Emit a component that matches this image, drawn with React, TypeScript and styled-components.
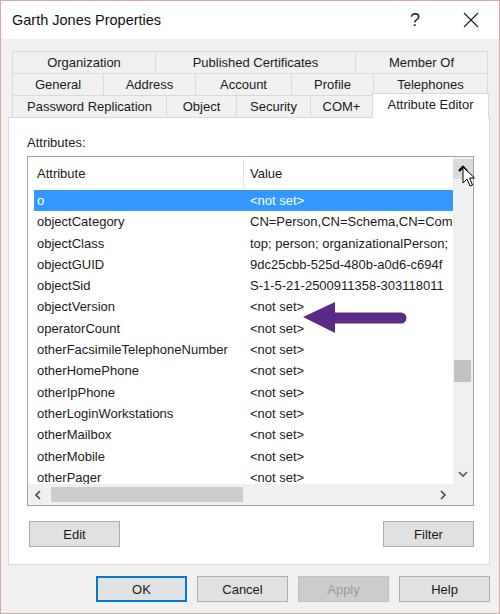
import React from 'react'
import styled, { createGlobalStyle } from 'styled-components'

const GlobalStyle = createGlobalStyle`
  body {
    margin: 0;
    font-family: "Liberation Sans", Arial, sans-serif;
    background: #fff;
  }
`

const Window = styled.div`
  position: relative;
  width: 500px;
  height: 614px;
  box-sizing: border-box;
  border: 1px solid #d9a7a7;
  background: #f0f0f0;
  display: flex;
  flex-direction: column;
  color: #111;
`

const TitleBar = styled.div`
  height: 38px;
  background: #fff;
  display: flex;
  align-items: center;
  padding-left: 11px;
`

const Title = styled.div`
  flex: 1;
  font-size: 14.5px;
  color: #111;
`

const TitleButton = styled.div`
  width: 46px;
  height: 38px;
  display: flex;
  align-items: center;
  justify-content: center;
  font-size: 18px;
  color: #222;
`

const CloseButton = styled(TitleButton)`
  margin-left: 10px;
  margin-right: 5px;
`

const Body = styled.div`
  flex: 1;
  padding: 12px 0 0 7px;
  display: flex;
  flex-direction: column;
`

const TabStrip = styled.div`
  margin-left: 4px;
  display: flex;
  flex-direction: column;
`

const TabRow = styled.div`
  display: flex;
  align-items: flex-end;
  height: 22px;
`

const Tab = styled.div<{ $w: number; $active?: boolean }>`
  width: ${(p) => p.$w}px;
  height: ${(p) => (p.$active ? 25 : 22)}px;
  box-sizing: border-box;
  margin-left: -1px;
  border: 1px solid #d9d9d9;
  border-bottom: none;
  background: ${(p) => (p.$active ? '#fff' : '#f0f0f0')};
  font-size: 13px;
  color: #1a1a1a;
  display: flex;
  align-items: ${(p) => (p.$active ? 'flex-start' : 'center')};
  padding-top: ${(p) => (p.$active ? 3 : 0)}px;
  justify-content: center;
  white-space: nowrap;
  position: relative;
  z-index: ${(p) => (p.$active ? 1 : 0)};
  margin-bottom: ${(p) => (p.$active ? -1 : 0)}px;
  &:first-child {
    margin-left: 0;
  }
`

const Panel = styled.div`
  width: 482px;
  height: 448px;
  box-sizing: border-box;
  border: 1px solid #d9d9d9;
  background: #fff;
  padding: 17px 15px 0 18px;
  display: flex;
  flex-direction: column;
`

const Label = styled.div`
  font-size: 13px;
  line-height: 16px;
  color: #222;
  margin-bottom: 5px;
`

const ListBox = styled.div`
  width: 447px;
  height: 350px;
  box-sizing: border-box;
  border: 1px solid #a3a3a3;
  background: #fff;
  display: grid;
  grid-template-columns: 1fr 20px;
  grid-template-rows: 1fr 21px;
`

const ListArea = styled.div`
  overflow: hidden;
  padding-left: 6px;
  font-size: 13px;
  color: #1a1a1a;
`

const Header = styled.div`
  display: flex;
  height: 33px;
  align-items: stretch;
`

const HeadCell = styled.div<{ $w?: number }>`
  ${(p) => (p.$w ? `width: ${p.$w}px; flex: none;` : 'flex: 1;')}
  box-sizing: border-box;
  display: flex;
  align-items: center;
  padding-left: ${(p) => (p.$w ? 3 : 6)}px;
  padding-bottom: 1px;
  border-right: ${(p) => (p.$w ? '1px solid #e3e3e3' : 'none')};
  margin: 2px 0 2px;
`

const Row = styled.div<{ $selected?: boolean }>`
  display: flex;
  height: 21.3px;
  line-height: 21.3px;
  white-space: nowrap;
  background: ${(p) => (p.$selected ? '#3399ff' : 'transparent')};
  color: ${(p) => (p.$selected ? '#fff' : '#1a1a1a')};
`

const AttrCell = styled.div`
  width: 210px;
  flex: none;
  padding-left: 3px;
  box-sizing: border-box;
  overflow: hidden;
`

const ValueCell = styled.div`
  flex: 1;
  padding-left: 6px;
  overflow: hidden;
`

const VScroll = styled.div`
  background: #f0f0f0;
  display: flex;
  flex-direction: column;
  padding-top: 2px;
`

const ScrollBtn = styled.div<{ $hover?: boolean }>`
  height: 20px;
  flex: none;
  display: flex;
  align-items: center;
  justify-content: center;
  background: ${(p) => (p.$hover ? '#dadada' : 'transparent')};
`

const VTrack = styled.div`
  flex: 1;
  display: flex;
  flex-direction: column;
`

const VThumb = styled.div<{ $offset: number }>`
  margin-top: ${(p) => p.$offset}px;
  margin-left: 1px;
  width: 17px;
  height: 22px;
  background: #c1c1c1;
`

const HScroll = styled.div`
  background: #f0f0f0;
  display: flex;
  align-items: center;
`

const HBtn = styled.div`
  width: 20px;
  height: 21px;
  flex: none;
  display: flex;
  align-items: center;
  justify-content: center;
`

const HTrack = styled.div`
  flex: 1;
  display: flex;
  align-items: center;
`

const HThumb = styled.div<{ $offset: number; $w: number }>`
  margin-left: ${(p) => p.$offset}px;
  width: ${(p) => p.$w}px;
  height: 15px;
  background: #cdcdcd;
`

const Corner = styled.div`
  background: #f0f0f0;
`

const PanelButtons = styled.div`
  display: flex;
  justify-content: space-between;
  margin-top: 15px;
  padding-left: 2px;
`

const Button = styled.div<{ $primary?: boolean; $disabled?: boolean }>`
  width: 91px;
  height: 26px;
  box-sizing: border-box;
  border: ${(p) => (p.$primary ? '2px solid #0078d7' : p.$disabled ? '1px solid #bfbfbf' : '1px solid #adadad')};
  background: ${(p) => (p.$disabled ? '#cccccc' : '#e1e1e1')};
  color: ${(p) => (p.$disabled ? '#9a9a9a' : '#1a1a1a')};
  font-size: 13px;
  display: flex;
  align-items: center;
  justify-content: center;
`

const Footer = styled.div`
  display: flex;
  justify-content: flex-end;
  gap: 10px;
  margin-top: 11px;
  padding-right: 9px;
`

const Overlay = styled.svg<{ $x: number; $y: number }>`
  position: absolute;
  left: ${(p) => p.$x}px;
  top: ${(p) => p.$y}px;
  z-index: 5;
`

const tabRows: [string, number, boolean?][][] = [
  [['Organization', 144], ['Published Certificates', 201], ['Member Of', 133]],
  [['General', 92], ['Address', 93], ['Account', 97], ['Profile', 83], ['Telephones', 115]],
  [['Password Replication', 155], ['Object', 71], ['Security', 75], ['COM+', 63], ['Attribute Editor', 117, true]],
]

const NS = '<not set>'

const attributes: [string, string][] = [
  ['o', NS],
  ['objectCategory', 'CN=Person,CN=Schema,CN=Com'],
  ['objectClass', 'top; person; organizationalPerson;'],
  ['objectGUID', '9dc25cbb-525d-480b-a0d6-c694f'],
  ['objectSid', 'S-1-5-21-2500911358-303118011'],
  ['objectVersion', NS],
  ['operatorCount', NS],
  ['otherFacsimileTelephoneNumber', NS],
  ['otherHomePhone', NS],
  ['otherIpPhone', NS],
  ['otherLoginWorkstations', NS],
  ['otherMailbox', NS],
  ['otherMobile', NS],
  ['otherPager', NS],
]

const Chevron = ({ dir, color = '#222', w = 1.6 }: { dir: 'up' | 'down' | 'left' | 'right'; color?: string; w?: number }) => {
  const pts = {
    up: '2,8 6,4 10,8',
    down: '2,4 6,8 10,4',
    left: '8,2 4,6 8,10',
    right: '4,2 8,6 4,10',
  }[dir]
  return (
    <svg width="12" height="12" viewBox="0 0 12 12">
      <polyline points={pts} fill="none" stroke={color} strokeWidth={w} />
    </svg>
  )
}

export default function App() {
  return (
    <>
      <GlobalStyle />
      <Window>
        <TitleBar>
          <Title>Garth Jones Properties</Title>
          <TitleButton>?</TitleButton>
          <CloseButton>
            <svg width="16" height="16" viewBox="0 0 16 16">
              <path d="M1 1 L15 15 M15 1 L1 15" stroke="#222" strokeWidth="1.2" />
            </svg>
          </CloseButton>
        </TitleBar>
        <Body>
          <TabStrip>
            {tabRows.map((row, i) => (
              <TabRow key={i}>
                {row.map(([name, w, active]) => (
                  <Tab key={name} $w={w} $active={active}>
                    {name}
                  </Tab>
                ))}
              </TabRow>
            ))}
          </TabStrip>
          <Panel>
            <Label>Attributes:</Label>
            <ListBox>
              <ListArea>
                <Header>
                  <HeadCell $w={210}>Attribute</HeadCell>
                  <HeadCell>Value</HeadCell>
                </Header>
                {attributes.map(([a, v], i) => (
                  <Row key={a} $selected={i === 0}>
                    <AttrCell>{a}</AttrCell>
                    <ValueCell>{v}</ValueCell>
                  </Row>
                ))}
              </ListArea>
              <VScroll>
                <ScrollBtn $hover>
                  <Chevron dir="up" color="#000" w={2.4} />
                </ScrollBtn>
                <VTrack>
                  <VThumb $offset={181} />
                </VTrack>
                <ScrollBtn>
                  <Chevron dir="down" color="#555" />
                </ScrollBtn>
              </VScroll>
              <HScroll>
                <HBtn>
                  <Chevron dir="left" color="#444" />
                </HBtn>
                <HTrack>
                  <HThumb $offset={3} $w={192} />
                </HTrack>
                <HBtn>
                  <Chevron dir="right" color="#444" />
                </HBtn>
              </HScroll>
              <Corner />
            </ListBox>
            <PanelButtons>
              <Button>Edit</Button>
              <Button>Filter</Button>
            </PanelButtons>
          </Panel>
          <Footer>
            <Button $primary>OK</Button>
            <Button>Cancel</Button>
            <Button $disabled>Apply</Button>
            <Button>Help</Button>
          </Footer>
        </Body>
        <Overlay $x={298} $y={298} width="112" height="38" viewBox="0 0 112 38">
          <polygon points="4,18 36,3 36,34" fill="#5b2a86" />
          <line x1="32" y1="19" x2="102" y2="19" stroke="#5b2a86" strokeWidth="11" strokeLinecap="round" />
        </Overlay>
        <Overlay $x={461} $y={165} width="16" height="24" viewBox="0 0 16 24">
          <path d="M1 1 L1 17 L5 13 L8 20 L10.5 19 L7.5 12 L12.5 12 Z" fill="#fff" stroke="#000" strokeWidth="1" strokeLinejoin="round" />
        </Overlay>
      </Window>
    </>
  )
}
